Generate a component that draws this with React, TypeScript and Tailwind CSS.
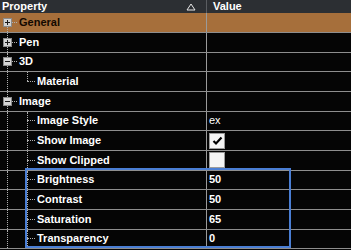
import React from 'react'

type Row = {
  label: string
  toggle?: '+' | '-'
  value?: React.ReactNode
  selected?: boolean
  last?: boolean // last child: guide stops at the elbow
}

const rows: Row[] = [
  { label: 'General', toggle: '+', selected: true },
  { label: 'Pen', toggle: '+' },
  { label: '3D', toggle: '-' },
  { label: 'Material', last: true },
  { label: 'Image', toggle: '-' },
  { label: 'Image Style', value: <span className="font-normal">ex</span> },
  { label: 'Show Image', value: 'check' },
  { label: 'Show Clipped', value: 'box' },
  { label: 'Brightness', value: '50' },
  { label: 'Contrast', value: '50' },
  { label: 'Saturation', value: '65' },
  { label: 'Transparency', value: '0' },
]

const guide = 'border-dotted border-[#b0b0b0]'

function ToggleBox({ kind }: { kind: '+' | '-' }) {
  return (
    <svg width="9" height="9" viewBox="0 0 9 9" className="shrink-0">
      <rect x="0.5" y="0.5" width="8" height="8" fill="#d4d4d4" stroke="#8a8a8a" />
      <line x1="2" y1="4.5" x2="7" y2="4.5" stroke="#1a1a1a" strokeWidth="1" />
      {kind === '+' && <line x1="4.5" y1="2" x2="4.5" y2="7" stroke="#1a1a1a" strokeWidth="1" />}
    </svg>
  )
}

function Value({ v }: { v: React.ReactNode }) {
  if (v === 'check' || v === 'box') {
    return (
      <div className="w-[16px] h-[16px] bg-[#f4f4f4] border border-[#9a9a9a] flex items-center justify-center">
        {v === 'check' && (
          <svg width="11" height="10" viewBox="0 0 11 10">
            <path d="M1.5 5 L4 7.5 L9.5 1.5" fill="none" stroke="#000" strokeWidth="2.2" />
          </svg>
        )}
      </div>
    )
  }
  return <span>{v}</span>
}

function TreeRow({ row, first }: { row: Row; first: boolean }) {
  return (
    <div className={`flex h-[19.67px] border-b border-[#8e8e8e] ${row.selected ? 'bg-[#a66f3b]' : 'bg-[#050505]'}`}>
      <div className={`w-[206px] flex items-stretch font-bold ${row.selected ? 'text-[#120800]' : 'text-white'}`}>
        {row.toggle ? (
          <>
            {/* root guide interrupted by the expand box */}
            <div className="w-[12px] flex flex-col pl-[3px]">
              <div className={`flex-1 ml-[4px] ${first ? '' : `border-l ${guide}`}`} />
              <ToggleBox kind={row.toggle} />
              <div className={`flex-1 ml-[4px] border-l ${guide}`} />
            </div>
            <div className={`self-center w-[5px] border-t ${guide}`} />
            <span className="self-center pl-[2px]">{row.label}</span>
          </>
        ) : (
          <>
            <div className={`ml-[7px] w-[20px] border-l ${guide}`} />
            <div className="w-[8px] flex flex-col">
              <div className={`flex-1 border-l ${guide}`} />
              <div className={`flex-1 border-t ${guide} ${row.last ? '' : 'border-l'}`} />
            </div>
            <span className="self-center pl-[2px]">{row.label}</span>
          </>
        )}
      </div>
      <div className="w-px bg-[#9a9a9a]" />
      <div className="flex-1 flex items-center pl-[2px] font-bold text-white">
        {row.value !== undefined && <Value v={row.value} />}
      </div>
    </div>
  )
}

export default function App() {
  return (
    <div className="w-[351px] h-[250px] overflow-hidden bg-[#050505] text-[11px] leading-none font-['Liberation_Sans',Arial,sans-serif]">
      <div className="flex h-[13.3px] bg-[#2c2f33] text-white font-bold">
        <div className="w-[206px] flex items-center justify-between pl-[2px] pr-[10px]">
          <span>Property</span>
          <svg width="10" height="8" viewBox="0 0 10 8">
            <path d="M5 1 L9 7 L1 7 Z" fill="none" stroke="#e8e8e8" strokeWidth="1" />
          </svg>
        </div>
        <div className="w-px bg-[#5a5d61]" />
        <div className="flex items-center pl-[6px]">Value</div>
      </div>
      <div className="relative">
        {rows.map((r, i) => (
          <TreeRow key={r.label} row={r} first={i === 0} />
        ))}
        {/* selection frame drawn over the image adjustment rows */}
        <div className="absolute left-[25px] w-[266px] top-[154.5px] h-[80px] border-2 border-[#4a7ed4] pointer-events-none" />
      </div>
    </div>
  )
}
